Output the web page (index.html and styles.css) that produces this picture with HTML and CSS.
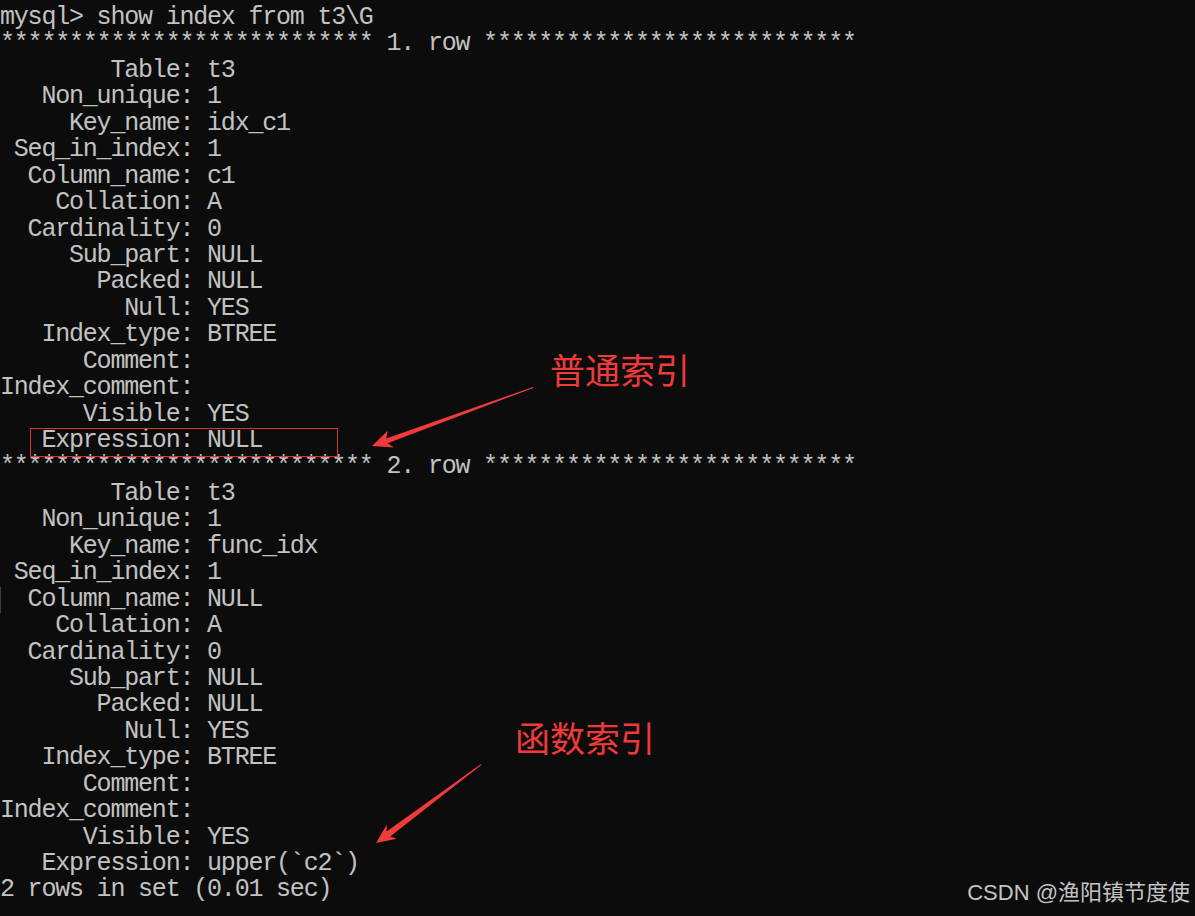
FILE: index.html
```html
<!DOCTYPE html>
<html lang="zh-CN">
<head>
<meta charset="utf-8">
<title>show index</title>
<link rel="stylesheet" href="styles.css">
</head>
<body>
<main class="screen">
  <div class="term">
    <div class="ln">mysql&gt; show index from t3\G</div>
    <div class="ln">*************************** 1. row ***************************</div>
    <div class="ln">        Table: t3</div>
    <div class="ln">   Non_unique: 1</div>
    <div class="ln">     Key_name: idx_c1</div>
    <div class="ln"> Seq_in_index: 1</div>
    <div class="ln">  Column_name: c1</div>
    <div class="ln">    Collation: A</div>
    <div class="ln">  Cardinality: 0</div>
    <div class="ln">     Sub_part: NULL</div>
    <div class="ln">       Packed: NULL</div>
    <div class="ln">         Null: YES</div>
    <div class="ln">   Index_type: BTREE</div>
    <div class="ln">      Comment: </div>
    <div class="ln">Index_comment: </div>
    <div class="ln">      Visible: YES</div>
    <div class="ln">   Expression: NULL</div>
    <div class="ln">*************************** 2. row ***************************</div>
    <div class="ln">        Table: t3</div>
    <div class="ln">   Non_unique: 1</div>
    <div class="ln">     Key_name: func_idx</div>
    <div class="ln"> Seq_in_index: 1</div>
    <div class="ln ln-mark">  Column_name: NULL</div>
    <div class="ln">    Collation: A</div>
    <div class="ln">  Cardinality: 0</div>
    <div class="ln">     Sub_part: NULL</div>
    <div class="ln">       Packed: NULL</div>
    <div class="ln">         Null: YES</div>
    <div class="ln">   Index_type: BTREE</div>
    <div class="ln">      Comment: </div>
    <div class="ln">Index_comment: </div>
    <div class="ln">      Visible: YES</div>
    <div class="ln">   Expression: upper(`c2`)</div>
    <div class="ln">2 rows in set (0.01 sec)</div>
  </div>

  <div class="hl-box"></div>
  <div class="note note-1">普通索引</div>
  <div class="note note-2">函数索引</div>

  <svg class="arrows" width="1195" height="916" viewBox="0 0 1195 916">
    <polygon fill="#f23a3a" points="533,387 386.2,438.5 387.7,430.7 372,446 393.9,447.5 387.6,443.2 533.4,388"/>
    <polygon fill="#f23a3a" points="481,764 386.6,831.6 386.8,824.5 376,843 396.8,838.8 390.2,836.4 481.6,764.8"/>
  </svg>

  <div class="watermark">CSDN @渔阳镇节度使</div>
</main>
</body>
</html>
```

FILE: styles.css
```css
html, body {
  margin: 0;
  padding: 0;
  background: #0c0c0c;
}

.screen {
  position: relative;
  width: 1195px;
  height: 916px;
  overflow: hidden;
  background: #0c0c0c;
}

.term {
  display: flex;
  flex-direction: column;
  padding-top: 5px;
  font-family: "Liberation Mono", "DejaVu Sans Mono", monospace;
  font-size: 25px;
  letter-spacing: -1.2px;
  line-height: 26.45px;
  color: #c2c2c2;
}

.ln {
  white-space: pre;
  height: 26.45px;
}

.ln-mark {
  box-shadow: inset 1px 0 0 #3c3c3c;
}

.hl-box {
  position: absolute;
  left: 30px;
  top: 428px;
  width: 306px;
  height: 27px;
  border: 1px solid #dc3030;
}

.note {
  position: absolute;
  font-family: "Noto Sans CJK SC", sans-serif;
  font-size: 35px;
  line-height: 1;
  color: #ef3a3a;
}

.note-1 {
  left: 550px;
  top: 351px;
}

.note-2 {
  left: 515px;
  top: 719px;
}

.arrows {
  position: absolute;
  left: 0;
  top: 0;
  pointer-events: none;
}

.watermark {
  position: absolute;
  right: 5px;
  top: 880px;
  font-family: "Liberation Sans", "Noto Sans CJK SC", sans-serif;
  font-size: 22px;
  line-height: 26px;
  color: #c4c4c4;
}
```
